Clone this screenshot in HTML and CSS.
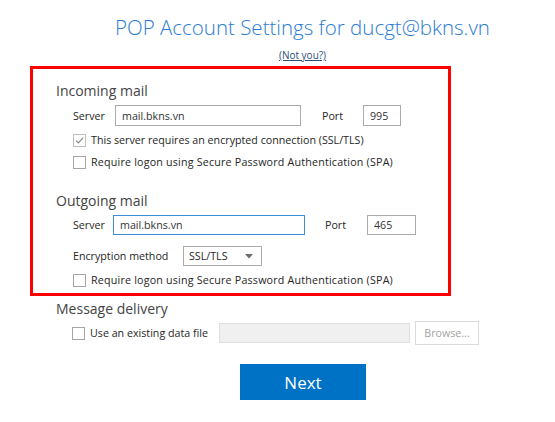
FILE: index.html
```html
<!DOCTYPE html>
<html lang="en">

<head>
    <meta charset="UTF-8">
    <meta name="viewport" content="width=device-width, initial-scale=1.0">
    <title>POP Account Settings</title>
    <link rel="stylesheet" href="styles.css">
</head>

<body>
    <div class="dialog">
        <div class="head">
            <h1 class="title">POP Account Settings for ducgt@bkns.vn</h1>
            <a class="notyou" href="#">(Not you?)</a>
        </div>

        <div class="marked">
            <h2 class="group">Incoming mail</h2>
            <div class="row row-server">
                <label class="lbl lbl-in">Server</label>
                <input class="field field-in" type="text" value="mail.bkns.vn">
                <label class="lbl lbl-port-in">Port</label>
                <input class="field port-in" type="text" value="995">
            </div>
            <div class="row check first">
                <span class="box checked">
                    <svg width="11" height="11" viewBox="0 0 11 11"><path d="M2 5.6 L4.4 8 L9.2 2.6" fill="none" stroke="#8a8a8a" stroke-width="1.2"/></svg>
                </span>
                <span>This server requires an encrypted connection (SSL/TLS)</span>
            </div>
            <div class="row check mid">
                <span class="box"></span>
                <span class="wide">Require logon using Secure Password Authentication (SPA)</span>
            </div>

            <h2 class="group second">Outgoing mail</h2>
            <div class="row row-server">
                <label class="lbl lbl-out">Server</label>
                <input class="field field-out" type="text" value="mail.bkns.vn">
                <label class="lbl lbl-port-out">Port</label>
                <input class="field port-out" type="text" value="465">
            </div>
            <div class="row row-enc">
                <label class="lbl lbl-enc">Encryption method</label>
                <div class="select">
                    <span>SSL/TLS</span>
                    <svg width="8" height="5" viewBox="0 0 8 5"><path d="M0 0 H8 L4 4.5 Z" fill="#6d6d6d"/></svg>
                </div>
            </div>
            <div class="row check last">
                <span class="box"></span>
                <span class="wide">Require logon using Secure Password Authentication (SPA)</span>
            </div>
        </div>

        <h2 class="group outside">Message delivery</h2>
        <div class="row row-file">
            <span class="box"></span>
            <span class="file-text">Use an existing data file</span>
            <div class="file-field"></div>
            <button class="browse" type="button">Browse...</button>
        </div>

        <div class="actions">
            <button class="next" type="button">Next</button>
        </div>
    </div>
</body>

</html>
```

FILE: styles.css
```css
body {
    margin: 0;
    background-color: white;
    font-family: "Open Sans", "Noto Sans", sans-serif;
    color: #262626;
}

.dialog {
    width: 555px;
    height: 422px;
    overflow: hidden;
}

.head {
    padding-left: 50px;
    text-align: center;
}

.title {
    margin: 0;
    padding-top: 12px;
    font-size: 20.5px;
    font-weight: 300;
    line-height: 30px;
    color: #2b7cd3;
}

.notyou {
    display: inline-block;
    margin-top: 4px;
    font-size: 10px;
    line-height: 12px;
    color: #2a4f7a;
    text-decoration: underline;
}

.marked {
    margin-left: 30px;
    margin-top: 2px;
    width: 415px;
    height: 212px;
    border: 3px solid #ff0000;
    padding-top: 12px;
}

.group {
    margin: 0 0 0 23px;
    font-size: 14px;
    font-weight: normal;
    line-height: 20px;
    color: #444;
}

.group.second {
    margin-top: 19px;
}

.group.outside {
    margin: 3px 0 0 56px;
}

.row {
    display: flex;
    align-items: center;
    font-size: 10.7px;
    margin-left: 40px;
}

.wide {
    letter-spacing: 0.2px;
}

.row-server {
    margin-top: 4px;
}

.lbl {
    flex: none;
}

.lbl-in {
    width: 42px;
}

.lbl-out {
    width: 40px;
}

.lbl-port-in {
    width: 21px;
    margin-left: 21px;
    margin-right: 20px;
}

.lbl-port-out {
    width: 21px;
    margin-left: 20px;
    margin-right: 21px;
}

.lbl-enc {
    width: 110px;
}

.field {
    box-sizing: border-box;
    height: 21px;
    padding: 0 6px;
    border: 1px solid #ababab;
    font-family: inherit;
    font-size: 10.7px;
    color: #333;
    outline: none;
}

.field-in {
    width: 186px;
}

.port-in {
    width: 38px;
}

.field-out {
    width: 192px;
    height: 20px;
    border-color: #3c8fd9;
}

.port-out {
    width: 49px;
    height: 20px;
}

.check {
    height: 20px;
}

.check.first {
    margin-top: 4px;
}

.check.mid {
    margin-top: 2px;
}

.check.last {
    margin-top: 4px;
}

.row-enc {
    margin-top: 11px;
}

.box {
    flex: none;
    box-sizing: border-box;
    width: 13px;
    height: 13px;
    margin-right: 5px;
    border: 1px solid #a6a6a6;
    background-color: white;
    display: flex;
    align-items: center;
    justify-content: center;
}

.box.checked {
    border-color: #c0c0c0;
}

.select {
    box-sizing: border-box;
    width: 79px;
    height: 20px;
    border: 1px solid #ababab;
    display: flex;
    align-items: center;
    justify-content: space-between;
    padding: 0 8px 0 5px;
    font-size: 10.7px;
}

.row-file {
    margin-left: 72px;
    margin-top: 2px;
    height: 24px;
}

.file-text {
    width: 129px;
    flex: none;
}

.file-field {
    width: 191px;
    height: 20px;
    box-sizing: border-box;
    border: 1px solid #dedede;
    background-color: #f0f0f0;
}

.browse {
    margin-left: 5px;
    width: 64px;
    height: 24px;
    border: 1px solid #dadada;
    background-color: white;
    color: #a3a3a3;
    font-family: inherit;
    font-size: 10.7px;
    padding: 0;
}

.actions {
    margin-top: 19px;
    padding-left: 240px;
}

.next {
    width: 126px;
    height: 36px;
    border: none;
    background-color: #0072c6;
    color: white;
    font-family: inherit;
    font-size: 17px;
    padding: 0;
    cursor: pointer;
}
```
